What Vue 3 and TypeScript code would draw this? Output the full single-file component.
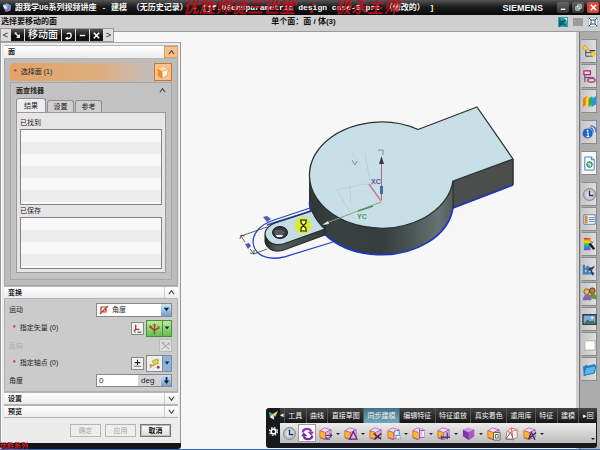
<script setup lang="ts">
import { ref } from 'vue'

const railItems = [
  { icon: 'tree', label: '装配导航器' },
  { icon: 'constraint', label: '约束导航器' },
  { icon: 'books', label: '重用库' },
  { icon: 'info', label: '信息', gap: true },
  { icon: 'page', label: '浏览器', gap: true, active: true },
  { icon: 'clock', label: '历史记录', gap: true },
  { icon: 'sheet', label: '部件' },
  { icon: 'rainbow', label: '材料' },
  { icon: 'tools', label: '加工' },
  { icon: 'people', label: '角色' },
  { icon: 'photo', label: '场景' },
  { icon: 'card', label: '模板' },
  { icon: 'folder', label: '文件夹' },
]

const ribbonTabs = ['工具', '曲线', '直接草图', '同步建模', '编辑特征', '特征重放', '真实着色', '重用库', '特征', '建模']
const activeRibbon = ref('同步建模')

const ribbonTools = [
  { icon: 'clock', label: '历史模式' },
  { icon: 'swap', label: '无历史模式', active: true },
  { icon: 'cube-move', label: '移动面', more: true },
  { icon: 'cube-tri', label: '拉出面', more: true },
  { icon: 'cube-x', label: '删除面' },
  { icon: 'cube-copy', label: '复制面', more: true },
  { icon: 'cube-dim', label: '尺寸', more: true },
  { icon: 'cube-fix', label: '固定', more: true },
  { icon: 'cube-purple', label: '壳体', more: true },
  { icon: 'cube-grid', label: '组' },
  { icon: 'cube-open', label: '截面' },
  { icon: 'cube-cut', label: '编辑截面', more: true },
]

const finderTabs = ['结果', '设置', '参考']
const activeFinder = ref('结果')
const motion = ref('角度')
const angle = ref('0')
</script>

<template>
  <div class="app">
    <svg class="defs" aria-hidden="true">
      <defs>
        <radialGradient id="ball"><stop offset="0" stop-color="#fff" /><stop offset="1" stop-color="#a9adba" /></radialGradient>
        <linearGradient id="hue" x2="0" y2="1">
          <stop offset="0" stop-color="#f22" /><stop offset=".3" stop-color="#fd0" /><stop offset=".55" stop-color="#2c4" /><stop offset=".8" stop-color="#28f" /><stop offset="1" stop-color="#a2d" />
        </linearGradient>
        <symbol id="cube-base" viewBox="0 0 16 16">
          <path d="M2 5 7 2l7 2v8l-7 3-5-2z" fill="#9a55bd" />
          <path d="M2 5 7 2l7 2-6 3z" fill="#f3dcf5" stroke="#a35cbd" stroke-width=".7" />
          <path d="M2 5l6 2v7l-6-2z" fill="#ffb52b" stroke="#d8682c" stroke-width=".8" />
          <path d="M8 7l6-3v8l-6 2z" fill="#e0b0dc" stroke="#a556a7" stroke-width=".7" />
        </symbol>
        <symbol id="tree" viewBox="0 0 16 16">
          <path d="M4 5v8h7M4 9h7" stroke="#446" fill="none" /><path d="M3 1l4 4-4 2-2-3zM11 7l3 3-3 4-2-3z" fill="#ffd22d" stroke="#c98d10" stroke-width=".7" /><path d="M8 7h6" stroke="#335" stroke-width="1.3" />
        </symbol>
        <symbol id="constraint" viewBox="0 0 16 16">
          <path d="M3 5v9M3 9h10" stroke="#446" fill="none" /><path d="M2 2h7v4H2z" fill="#fce" stroke="#b02877" stroke-width="1.3" /><ellipse cx="10" cy="12" rx="4" ry="2.2" fill="none" stroke="#c23f84" stroke-width="1.5" />
        </symbol>
        <symbol id="books" viewBox="0 0 16 16">
          <path d="M1 5l4-3v9l-4 3z" fill="#f5791d" /><path d="M4 5l4-3v9l-4 3z" fill="#ffd52a" /><path d="M7 5l4-3v9l-4 3z" fill="#35ad45" /><path d="M10 5l5-3v9l-5 3z" fill="#2497dc" />
        </symbol>
        <symbol id="info" viewBox="0 0 16 16">
          <circle cx="6" cy="9" r="5.4" fill="#2264bd" /><circle cx="6" cy="6" r="1" fill="#fff" /><path d="M5 8.5h1.5v4M4.5 12.5H8" stroke="#fff" stroke-width="1.2" fill="none" /><path d="M8 3q4 0 4 5M9 1q6 0 6 7" stroke="#2473c8" stroke-width="1.3" fill="none" />
        </symbol>
        <symbol id="page" viewBox="0 0 16 16">
          <path d="M3 1h7l3 3v11H3z" fill="#fff" stroke="#397cb4" /><path d="M10 1v3h3" fill="#bcd9ec" stroke="#397cb4" /><circle cx="8" cy="9" r="3" fill="#69bd98" stroke="#198150" /><path d="M6 8l3 1v2" stroke="#fff" fill="none" />
        </symbol>
        <symbol id="clock" viewBox="0 0 16 16">
          <circle cx="8" cy="8" r="6.5" fill="url(#ball)" stroke="#8388a0" /><path d="M8 4v5h4" stroke="#263348" stroke-width="1.5" fill="none" />
        </symbol>
        <symbol id="sheet" viewBox="0 0 16 16">
          <path d="M2 3h12v10H2z" fill="#fff" stroke="#55779b" /><path d="M3 4h3v8H3z" fill="#d88743" /><path d="M7 6h6M7 8h6M7 10h6" stroke="#477ab1" />
        </symbol>
        <symbol id="rainbow" viewBox="0 0 16 16">
          <path d="M2 1h7v13H2z" fill="url(#hue)" /><path d="M8 7l5 6" stroke="#161616" stroke-width="2.5" /><path d="M9 4l2 2M12 5l-2 2" stroke="#7c4c2e" />
        </symbol>
        <symbol id="tools" viewBox="0 0 16 16">
          <path d="M2 3v9h11M2 7h10M6 4v8" stroke="#397ec1" stroke-width="2.4" fill="none" /><path d="M8 6l4 8M13 5L7 9" stroke="#333c48" stroke-width="1.7" />
        </symbol>
        <symbol id="people" viewBox="0 0 16 16">
          <circle cx="5" cy="5" r="3" fill="#e8c048" stroke="#78591c" /><circle cx="11" cy="4" r="3" fill="#bd793e" stroke="#5a3b15" /><path d="M1 14q0-6 5-6t4 6z" fill="#8c5eb3" /><path d="M8 12q0-5 4-5t3 6z" fill="#65933a" />
        </symbol>
        <symbol id="photo" viewBox="0 0 16 16">
          <path d="M1 3h14v10H1z" fill="#79afe4" stroke="#333b46" stroke-width="1.5" /><circle cx="11" cy="6" r="1.3" fill="#fff7a0" /><path d="M2 12l4-4 3 2 3-1 2 3z" fill="#3e714d" />
        </symbol>
        <symbol id="card" viewBox="0 0 16 16"><path d="M3 4h11v10H3z" fill="#fff" stroke="#aaa" /><path d="M4 4l2-3" stroke="#d7cc76" stroke-width="2" /></symbol>
        <symbol id="folder" viewBox="0 0 16 16"><path d="M1 5l4-2 1 1 8-2v9L2 15z" fill="#247fc1" /><path d="M2 14L4 6l11-2-2 8z" fill="#58b6ec" stroke="#1f78b3" /></symbol>
        <symbol id="swap" viewBox="0 0 16 16">
          <path d="M3 7q0-4 5-4 3 0 4 3" fill="none" stroke="#9a35bd" stroke-width="2.4" /><path d="M8 6h7l-3 4z" fill="#9a35bd" />
          <path d="M13 10q0 4-5 4-3 0-4-3" fill="none" stroke="#7d25a9" stroke-width="2.4" /><path d="M1 11h7L4 7z" fill="#7d25a9" />
        </symbol>
        <symbol id="cube-move" viewBox="0 0 16 16"><use href="#cube-base" /><path d="M8 10h7M12 8l3 2-3 2M9 12v2h4" stroke="#3c2f67" fill="none" /></symbol>
        <symbol id="cube-tri" viewBox="0 0 16 16"><use href="#cube-base" /><path d="M7 14l4-8 4 8z" fill="#d8b6e6" stroke="#61257e" stroke-width="1.2" /></symbol>
        <symbol id="cube-x" viewBox="0 0 16 16"><use href="#cube-base" /><path d="M6 8l8 6M14 8l-7 6" stroke="#432c48" stroke-width="1.6" /></symbol>
        <symbol id="cube-copy" viewBox="0 0 16 16"><use href="#cube-base" /><path d="M9 5h5v5H9zM11 10h4v4h-4z" fill="#e9f0ff" stroke="#6289c2" stroke-dasharray="2 1" /></symbol>
        <symbol id="cube-dim" viewBox="0 0 16 16"><use href="#cube-base" /><path d="M9 3v11M9 5h6M9 12h6M13 5v7" stroke="#fff" stroke-width="2" /><path d="M9 3v11M9 5h6M9 12h6" stroke="#7943a1" /></symbol>
        <symbol id="cube-fix" viewBox="0 0 16 16"><use href="#cube-base" /><path d="M5 12h10M12 7v7M6 10v4" stroke="#454073" stroke-width="1.4" /></symbol>
        <symbol id="cube-purple" viewBox="0 0 16 16"><path d="M2 4l6-2 6 2v7l-6 4-6-4z" fill="#7f35b0" /><path d="M2 4l6-2 6 2-6 3z" fill="#cda0e0" /><path d="M8 7l6-3v7l-6 4z" fill="#a65bc7" /></symbol>
        <symbol id="cube-grid" viewBox="0 0 16 16"><use href="#cube-base" /><path d="M8 7h7v8H8z" fill="#fff" stroke="#555" /><path d="M10 9h3v4h-3z" fill="none" stroke="#555" /></symbol>
        <symbol id="cube-open" viewBox="0 0 16 16"><path d="M3 6l5-4 6 2v8l-5 3-7-2z" fill="#fff3ef" stroke="#dc7061" /><path d="M8 2v4l6-2M3 6l6 1v7" fill="none" stroke="#dc7061" /><path d="M2 14l5-7 3 7z" fill="#fff" stroke="#51507b" /></symbol>
        <symbol id="cube-cut" viewBox="0 0 16 16"><use href="#cube-base" /><path d="M7 14l3-7 4 8M15 7l-7 6" stroke="#333150" stroke-width="1.3" fill="none" /></symbol>
        <symbol id="up" viewBox="0 0 8 8"><path d="M1 6l3-4 3 4" fill="none" stroke="#444" stroke-width="1.3" /></symbol>
        <symbol id="down" viewBox="0 0 8 8"><path d="M1 2l3 4 3-4" fill="none" stroke="#444" stroke-width="1.3" /></symbol>
        <symbol id="caret" viewBox="0 0 8 8"><path d="M1 2h6L4 6z" fill="#10233d" /></symbol>
      </defs>
    </svg>

    <header class="titlebar">
      <svg class="logo" viewBox="0 0 12 12"><path d="M1 3l5-2 5 3-1 6-5 1-3-4z" fill="#6aa8cf" /><path d="M2 2l4 6 5-7-3 9-4 1z" fill="#bc5dab" /><path d="M1 3l4 1 1 4-3-1z" fill="#e6f4fb" /></svg>
      <h1>跟我学UG系列视频讲座 - 建模 （无历史记录） - [jf.06ensparametric design case-5.prt （修改的） ]</h1>
      <span class="watermark"><span>优胜师徒三世堂</span><span>：</span><span>极永主师</span></span>
      <span class="brand">SIEMENS</span>
      <button class="win" aria-label="最小化"><svg viewBox="0 0 10 10"><path d="M2 7h5" stroke="#fff" stroke-width="1.6" /></svg></button>
      <button class="win" aria-label="还原"><svg viewBox="0 0 10 10"><path d="M4 2h4v4H4zM2 4h4v4H2z" fill="#777" stroke="#ddd" /></svg></button>
      <button class="win close" aria-label="关闭"><svg viewBox="0 0 10 10"><path d="M2 2l6 6M8 2L2 8" stroke="#fff" stroke-width="1.8" /></svg></button>
    </header>

    <div class="prompt">
      <strong>选择要移动的面</strong>
      <strong class="status">单个面：面 / 体(3)</strong>
      <span class="prompt-icons">
        <svg viewBox="0 0 10 10"><path d="M0 0h10v10H0z" fill="#2ba6a2" /><path d="M1 1l3 3 5-3-3 5 3 3-5-1-3 2z" fill="#155a80" /><path d="M6 1h3v3z" fill="#eee" /></svg>
        <svg viewBox="0 0 10 10"><path d="M0 1h10v8H0z" fill="#9b9b9b" /></svg>
        <svg viewBox="0 0 10 10"><path d="M0 0h10v10H0z" fill="#edf2f6" stroke="#789" /><path d="M3 3h4v4H3zM1 1l2 2M9 1L7 3M1 9l2-2M9 9L7 7" fill="#fff" stroke="#34566f" /></svg>
      </span>
    </div>

    <main class="workspace">
      <svg class="model" viewBox="0 32 576 417" preserveAspectRatio="xMinYMin meet" role="img" aria-label="三维模型">
        <defs>
          <linearGradient id="wall"><stop offset="0" stop-color="#303735" /><stop offset=".18" stop-color="#394240" /><stop offset=".5" stop-color="#353d3d" /><stop offset=".7" stop-color="#4a5454" /><stop offset=".9" stop-color="#677373" /><stop offset="1" stop-color="#505b5a" /></linearGradient>
          <linearGradient id="armside"><stop offset="0" stop-color="#222" /><stop offset=".2" stop-color="#555e5d" /><stop offset="1" stop-color="#343c3a" /></linearGradient>
        </defs>
        <path d="M453 181l60-22v26l-60 23z" fill="#4a4f4e" stroke="#242a29" />
        <path d="M309.5 175v27a72 53 0 0 0 143.5 6v-27z" fill="url(#wall)" />
        <path d="M309.5 202a72 53 0 0 0 143.5 6l60-23" fill="none" stroke="#1d36c4" stroke-width="1.6" />
        <path d="M418 129.5A72 53 0 1 0 453 181l60-22-36-52z" fill="#c9dfe7" stroke="#2b3332" stroke-width="1.3" stroke-linejoin="round" />
        <path d="M453 181v27M513 159v26M309.5 175v27" stroke="#2b3332" />
        <path d="M310 208l-36 12c-15 5-21 14-21 22 1 13 14 19 31 15l49-15" fill="none" stroke="#2445cb" stroke-width="1.3" />
        <path d="M311 211l-44 14" stroke="#2445cb" stroke-width="1.5" />
        <path d="M265 235v7c2 8 10 11 19 8l41-15v-11l-43 14z" fill="url(#armside)" stroke="#202624" />
        <path d="M312 211l-37 12c-10 4-12 11-8 16 4 6 12 7 19 4l39-14c-6-5-10-11-13-18z" fill="#c6dce4" stroke="#222c2c" stroke-width="1.2" />
        <ellipse cx="280" cy="232.5" rx="7.5" ry="6" fill="#37383a" stroke="#111" />
        <path d="M274 231q6-3 11 1l-2 5q-5 2-8-2z" fill="#565a60" /><path d="M276 235h7l-1 2h-5z" fill="#eee" />
        <g fill="none" stroke="#3b3d35" stroke-width=".8"><path d="M241 236l26-9M254 254l13-5M241 236l4 6M250 249l4 5M240 239l1-4 4 1M250 253l4 1v-4" /></g>
        <g fill="#5355c4"><path d="M263 217l4-1 4 3-4 3zM245 244l4-1 2 3-3 3z" /></g>
        <g fill="none" stroke="#b6cacf" stroke-width=".8"><path d="M337 190l26-6 12 1M337 190l13 22M350 187l1 17M352 153l9 13M365 153l5 28" /></g>
        <path d="M352 160l3 5 2-4M378 150h5v5" fill="none" stroke="#798f91" />
        <path d="M381.5 200v-38" stroke="#b06572" /><path d="M379 164l2.5-8 2.5 8z" fill="#333c47" /><path d="M381.5 186v8" stroke="#466a9a" stroke-width="3" />
        <path d="M381 201l-12-17" stroke="#c58183" stroke-width="1.5" />
        <path d="M381 202l-57 22" stroke="#8f9e8d" /><path d="M373 206l-15 5" stroke="#4d9260" stroke-width="1.4" />
        <path d="M322 225l6-4 1 3z" fill="#e3e5dc" />
        <text x="371" y="184" class="axis x">XC</text><text x="357" y="219" class="axis y">YC</text>
        <circle cx="303" cy="225.5" r="8" fill="#d9ed1b" />
        <path d="M300 220h7M300 231h7M301 220v3l5 5v3M306 220v3l-5 5v3" stroke="#1e2517" stroke-width="1.1" fill="none" /><path d="M302 222h3l-1.5 2zM302 230l1.5-3 1.5 3z" fill="#fff" />
      </svg>

      <nav class="rail" aria-label="资源条">
        <button v-for="item in railItems" :key="item.icon" :aria-label="item.label" :class="{ gap: item.gap, active: item.active }">
          <svg viewBox="0 0 16 16"><use :href="'#' + item.icon" /></svg>
        </button>
      </nav>
    </main>

    <section class="dialog" aria-label="移动面">
      <div class="dialog-tabs">
        <button class="side" aria-label="上一个">&lt;</button>
        <span class="dark"><svg viewBox="0 0 10 10"><path d="M2 2l5 5M2 2h2M7 4v3H4" stroke="#eee" stroke-width="1.5" fill="none" /></svg></span>
        <h2 class="dark">移动面</h2>
        <button class="dark" aria-label="重置"><svg viewBox="0 0 10 10"><path d="M3 3q5-2 5 2 0 4-5 3" stroke="#fff" stroke-width="1.5" fill="none" /><path d="M1 8l3-2v4z" fill="#fff" /></svg></button>
        <button class="dark" aria-label="折叠"><svg viewBox="0 0 10 10"><path d="M2 5h6" stroke="#fff" stroke-width="1.6" /></svg></button>
        <button class="dark" aria-label="关闭对话框"><svg viewBox="0 0 10 10"><path d="M2 2l6 6M8 2L2 8" stroke="#fff" stroke-width="1.8" /></svg></button>
        <button class="side" aria-label="下一个">&gt;</button>
      </div>

      <div class="panel">
        <h3 class="group first"><span>面</span><button class="hot" aria-label="折叠面"><svg viewBox="0 0 8 8"><use href="#up" /></svg></button></h3>
        <div class="face">
          <div class="select-row">
            <span><i>*</i>选择面 (1)</span>
            <button aria-label="选择面"><svg viewBox="0 0 16 16"><path d="M2 4l7-2 5 3-1 7-7 3-4-3z" fill="#ee8b26" /><path d="M2 4l7-2 5 3-7 2z" fill="#ffe3b0" /><path d="M7 7l7-2-1 7-6 3z" fill="#fff5e5" stroke="#c88a45" stroke-width=".6" /></svg></button>
          </div>
          <div class="finder">
            <h4><span>面查找器</span><svg viewBox="0 0 8 8"><use href="#up" /></svg></h4>
            <div class="tabs" role="tablist">
              <button v-for="tab in finderTabs" :key="tab" role="tab" :aria-selected="activeFinder === tab" @click="activeFinder = tab">{{ tab }}</button>
            </div>
            <div class="tab-body">
              <p>已找到</p>
              <ul><li v-for="n in 6" :key="n"></li></ul>
              <p>已保存</p>
              <ul><li v-for="n in 4" :key="n"></li></ul>
            </div>
          </div>
        </div>

        <h3 class="group"><span>变换</span><button aria-label="折叠变换"><svg viewBox="0 0 8 8"><use href="#up" /></svg></button></h3>
        <div class="fields">
          <div class="row">
            <label for="motion">运动</label>
            <div class="combo">
              <svg viewBox="0 0 10 10"><path d="M2 2h5v5H2zM1 9l8-8" stroke="#c2372e" stroke-width="1.2" fill="none" /></svg>
              <select id="motion" v-model="motion"><option>角度</option><option>距离</option></select>
              <span class="drop"><svg viewBox="0 0 8 8"><use href="#caret" /></svg></span>
            </div>
          </div>
          <div class="row">
            <span class="req"><i>*</i>指定矢量 (0)</span>
            <button class="mini" aria-label="矢量对话框"><svg viewBox="0 0 12 12"><path d="M4 2v5h4M4 7l-2 2" stroke="#b53535" stroke-width="1.5" fill="none" /><path d="M6 10h4M3 10h1" stroke="#222" /></svg></button>
            <button class="split green" aria-label="矢量类型"><svg viewBox="0 0 16 14"><path d="M8 13V3M3 5l5 4 5-3" stroke="#8d4b27" stroke-width="1.5" fill="none" /><path d="M6 4l2-3 2 3zM2 7l1-4 3 2zM11 4l3 1-2 3z" fill="#c2572c" /></svg><span><svg viewBox="0 0 8 8"><use href="#caret" /></svg></span></button>
          </div>
          <div class="row">
            <span class="off">反向</span>
            <button class="mini cross" disabled aria-label="反向"><svg viewBox="0 0 12 12"><path d="M2 3l8 7M10 3l-8 7M2 3h3M10 3v3" stroke="#999" fill="none" /></svg></button>
          </div>
          <div class="row">
            <span class="req"><i>*</i>指定轴点 (0)</span>
            <button class="mini" aria-label="点对话框"><svg viewBox="0 0 12 12"><path d="M6 2v6M3 5h6" stroke="#222" stroke-width="1.2" /><path d="M2 9h8" stroke="#666" /></svg></button>
            <button class="split" aria-label="点类型"><svg viewBox="0 0 16 14"><path d="M3 12l10-9" stroke="#888" /><path d="M6 4l5-2 1 5-5 2z" fill="#e7d82c" stroke="#8a8335" stroke-width=".6" /><circle cx="4" cy="9" r="1.5" fill="#d89a39" /><circle cx="12" cy="11" r="1.5" fill="#b43b3b" /></svg><span><svg viewBox="0 0 8 8"><use href="#caret" /></svg></span></button>
          </div>
          <div class="row">
            <label for="angle">角度</label>
            <div class="combo unit">
              <input id="angle" v-model="angle" type="text" /><span>deg</span>
              <span class="drop"><svg viewBox="0 0 8 8"><path d="M3 0h2v4h2L4 8 1 4h2z" fill="#10233d" /></svg></span>
            </div>
          </div>
        </div>

        <h3 class="group"><span>设置</span><button aria-label="展开设置"><svg viewBox="0 0 8 8"><use href="#down" /></svg></button></h3>
        <h3 class="group"><span>预览</span><button aria-label="展开预览"><svg viewBox="0 0 8 8"><use href="#down" /></svg></button></h3>
        <div class="actions">
          <button disabled>确定</button><button disabled>应用</button><button class="cancel">取消</button>
        </div>
      </div>
      <footer>优胜系列</footer>
    </section>

    <section class="ribbon" aria-label="工具栏">
      <div class="ribbon-side">
        <svg viewBox="0 0 12 12"><path d="M1 2l4 2 6-3-4 6-1 4-4-3z" fill="#55aaa0" /><path d="M5 5l6-4-3 6z" fill="#ddd35c" /><path d="M2 8l3-3 2 5z" fill="#def" /></svg>
        <button aria-label="工具栏选项"><svg viewBox="0 0 12 12"><circle cx="6" cy="6" r="2.6" fill="none" stroke="#fff" stroke-width="1.8" /><circle cx="6" cy="6" r="4.3" fill="none" stroke="#fff" stroke-width="1.3" stroke-dasharray="1.7 1.7" /></svg></button>
      </div>
      <div class="ribbon-main">
        <div class="ribbon-tabs">
          <span class="arrow">◂</span>
          <button v-for="tab in ribbonTabs" :key="tab" :class="{ active: activeRibbon === tab }" @click="activeRibbon = tab">{{ tab }}</button>
          <button>▸回</button>
        </div>
        <div class="ribbon-tools">
          <template v-for="tool in ribbonTools" :key="tool.label">
            <button :aria-label="tool.label" :class="{ active: tool.active }"><svg viewBox="0 0 16 16"><use :href="'#' + tool.icon" /></svg></button>
            <span v-if="tool.more" class="more"></span>
          </template>
          <span class="more end"></span>
        </div>
      </div>
    </section>
  </div>
</template>

<style>
body { margin: 0; }
</style>

<style scoped>
* { box-sizing: border-box; }
.app { position: relative; display: flex; flex-direction: column; min-height: 100vh; overflow: hidden; background: #f7f7f7; border-bottom: 1px solid #2d6cc0; font-family: "Liberation Sans", "Noto Sans CJK SC", sans-serif; font-size: 7px; line-height: 10px; color: #222; }
.defs { position: absolute; width: 0; height: 0; }
svg { display: block; flex: none; }
button, input, select { margin: 0; padding: 0; border: 0; border-radius: 0; font: inherit; color: inherit; background: none; }
h1, h2, h3, h4, p, ul { margin: 0; padding: 0; font: inherit; list-style: none; }
i { color: #d02a24; font-style: normal; font-weight: bold; }

.titlebar { position: relative; display: flex; align-items: center; gap: 3px; height: 15px; padding: 0 1px 0 2px; background: linear-gradient(#555, #1c1c1c 45%, #080808); color: #f4f4f4; }
.logo { width: 10px; height: 11px; }
.titlebar h1 { flex: 1; font: bold 8px/14px "Liberation Mono", "Noto Sans CJK SC", monospace; white-space: nowrap; overflow: hidden; }
.watermark { position: absolute; left: 183px; top: 0; display: flex; gap: 12px; color: #c3121f; font: italic bold 16px/16px "Liberation Serif", "Noto Sans CJK SC", serif; white-space: nowrap; z-index: 2; opacity: .85; }
.brand { font-size: 9px; font-weight: bold; margin-right: 11px; }
.win { display: grid; place-items: center; width: 12px; height: 11px; background: linear-gradient(#666, #333); border-radius: 2px; }
.win svg { width: 9px; height: 9px; }
.close { background: #d8473b; }

.prompt { display: grid; grid-template-columns: 1fr auto 1fr; align-items: center; height: 17px; padding: 0 2px 3px 1px; background: #cfcfcf; border-bottom: 1px solid #999; font-size: 8px; color: #111; }
.status { padding-left: 8px; }
.prompt-icons { display: flex; justify-content: flex-end; gap: 5px; }
.prompt-icons svg { width: 10px; height: 10px; }

.workspace { flex: 1; display: flex; }
.model { flex: 1; min-width: 0; align-self: flex-start; }
.axis { font: bold 7px "Liberation Sans", sans-serif; }
.axis.x { fill: #5a4e9d; }
.axis.y { fill: #46946a; }
.rail { display: flex; flex-direction: column; gap: 1px; width: 24px; padding: 7px 3px 0 2px; background: #acacac; border-left: 3px solid #d0d0d0; box-shadow: inset 1px 0 #777; }
.rail button { display: grid; place-items: center; width: 16px; height: 24px; background: linear-gradient(90deg, #c6c6c6, #dedede); border: 1px solid #8b8b8b; border-left-color: #ccc; }
.rail svg { width: 15px; height: 15px; }
.rail .gap { margin-top: 6px; }
.rail .active { background: #f7f7f7; }

.dialog { position: absolute; left: 0; top: 28px; width: 181px; }
.dialog-tabs { display: flex; width: 114px; height: 14px; border: 1px solid #999; background: #ddd; gap: 1px; }
.dialog-tabs .side { flex: 1; font-size: 9px; font-weight: bold; color: #555; }
.dialog-tabs .dark { display: grid; place-items: center; width: 13px; background: linear-gradient(#555, #111 60%); color: #fff; }
.dialog-tabs h2.dark { width: 36px; font-size: 10px; font-weight: 500; line-height: 12px; }
.dialog-tabs svg { width: 9px; height: 9px; }
.panel { border: 1px solid #999; border-width: 0 1px; background: #ececec; padding: 3px 2px 6px 3px; box-shadow: inset 0 1px #aaa, inset 1px 0 #fff; }
.group { display: flex; align-items: stretch; height: 13px; border: 1px solid #b5b5b5; border-width: 1px 0; background: linear-gradient(#fff, #ececec); font-weight: bold; }
.group span { flex: 1; padding-left: 4px; line-height: 11px; }
.group button { display: grid; place-items: center; width: 14px; border-left: 1px solid #ccc; }
.group svg, h4 svg { width: 7px; height: 7px; }
.group.first { height: 14px; }
.group .hot { background: #f4c08d; border: 1px solid #e09c55; }
.face { padding: 4px 5px 5px; background: #bcbcbc; border: 1px solid #a5a5a5; border-top: 0; }
.select-row { display: flex; align-items: center; justify-content: space-between; height: 18px; background: linear-gradient(90deg, #e0a368, #dfae80 55%, #c5bdb5 85%); border-radius: 2px; }
.select-row span { padding-left: 4px; }
.select-row i, .req i { margin-right: 4px; }
.select-row button { display: grid; place-items: center; width: 18px; height: 18px; background: #f6c18c; border: 1px solid #c7793a; }
.select-row svg { width: 14px; height: 14px; }
.finder { margin-top: 1px; padding: 0 5px 6px; background: #c2c2c2; border: 1px solid #a7a7a7; }
.finder h4 { display: flex; align-items: center; justify-content: space-between; height: 15px; font-weight: bold; }
.tabs { display: flex; align-items: flex-end; gap: 1px; height: 14px; padding-top: 1px; }
.tabs button { width: 27px; height: 12px; background: #cfcfcf; border: 1px solid #8f8f8f; border-bottom: 0; border-radius: 3px 3px 0 0; }
.tabs button[aria-selected="true"] { width: 30px; height: 14px; background: #ededed; }
.tab-body { padding: 4px 3px 3px; background: #e6e6e6; border: 1px solid #999; }
.tab-body p { line-height: 12px; }
.tab-body ul { display: flex; flex-direction: column; border: 1px solid #858585; background: #f8f8f8; }
.tab-body li { height: 12px; }
.tab-body ul:first-of-type { height: 76px; }
.tab-body ul:last-of-type { height: 52px; }
.tab-body li:nth-child(even) { background: #ededed; }

.fields { display: grid; grid-template-rows: 19px 18px 17px 18px 17px; padding: 1px 5px 2px 4px; background: #cbcbcb; border: 1px solid #b0b0b0; border-top: 0; }
.row { display: flex; align-items: center; }
.row label, .row .req, .row .off { flex: 1; }
.row .req { padding-left: 4px; }
.off { color: #aaa; }
.combo { display: flex; align-items: center; width: 76px; height: 14px; background: #fff; border: 1px solid #888; }
.combo > svg { width: 10px; height: 10px; margin-left: 2px; }
.combo select { flex: 1; appearance: none; padding-left: 3px; }
.drop { display: grid; place-items: center; align-self: stretch; width: 10px; background: linear-gradient(#cfe3f6, #6f9fce); }
.drop svg { width: 7px; height: 7px; }
.unit { height: 13px; background: #d4d4d4; font-size: 8px; }
.unit input { width: 41px; height: 11px; padding-left: 2px; background: #fff; }
.unit > span:not(.drop) { flex: 1; padding-left: 3px; }
.mini { display: grid; place-items: center; width: 13px; height: 13px; margin-right: 2px; background: #f1f1f1; border: 1px solid #888; }
.mini svg { width: 11px; height: 11px; }
.mini.cross { margin-right: 0; background: #ddd; border-color: #bbb; }
.split { display: flex; width: 26px; height: 17px; background: #eee; border: 1px solid #888; }
.split > svg { width: 15px; height: 15px; }
.split span { display: grid; place-items: center; align-self: stretch; flex: 1; background: #8ab3df; border-left: 1px solid #889; }
.split span svg { width: 6px; height: 6px; }
.green, .green span { background: linear-gradient(#b9eb9f, #64bf4c); border-color: #4b8d3a; }
.actions { display: flex; justify-content: flex-end; gap: 4px; padding: 6px 7px 0 0; }
.actions button { width: 31px; height: 13px; border: 1px solid #b5b5b5; background: #eee; color: #a9a9a9; }
.actions .cancel { border-color: #777; background: linear-gradient(#fff, #ddd); color: #111; font-weight: bold; box-shadow: inset 0 0 0 1px #bbb; }
.dialog footer { height: 6px; background: #141418; border-radius: 0 0 3px 3px; color: #c5202c; font-size: 7px; font-weight: bold; line-height: 5px; }

.ribbon { position: absolute; right: 3px; bottom: 1px; display: flex; width: 331px; height: 40px; padding-bottom: 5px; background: #17191c; border-radius: 3px; color: #f2f2f2; }
.ribbon-side { display: flex; flex-direction: column; align-items: center; gap: 5px; width: 14px; padding-top: 2px; }
.ribbon-side svg { width: 11px; height: 11px; }
.ribbon-main { flex: 1; display: flex; flex-direction: column; min-width: 0; }
.ribbon-tabs { display: flex; height: 15px; background: linear-gradient(#444, #161616); }
.ribbon-tabs button { flex: auto; border-left: 1px solid #555; white-space: nowrap; }
.ribbon-tabs .arrow { line-height: 14px; }
.ribbon-tabs .active { background: linear-gradient(#477184, #6fa6b9); }
.ribbon-tools { flex: 1; display: flex; align-items: center; margin-right: 1px; background: linear-gradient(#ececec, #bdbdbd); }
.ribbon-tools button { display: grid; place-items: center; width: 18px; height: 18px; }
.ribbon-tools svg { width: 15px; height: 15px; }
.ribbon-tools .active { background: #fff; border: 1px solid #999; }
.more { flex: none; width: 7px; height: 0; display: grid; place-items: center; }
.more::after { content: ""; border: 2px solid transparent; border-top-color: #222; border-bottom: 0; }
.more.end { margin-left: auto; align-self: flex-end; height: 8px; }
</style>
